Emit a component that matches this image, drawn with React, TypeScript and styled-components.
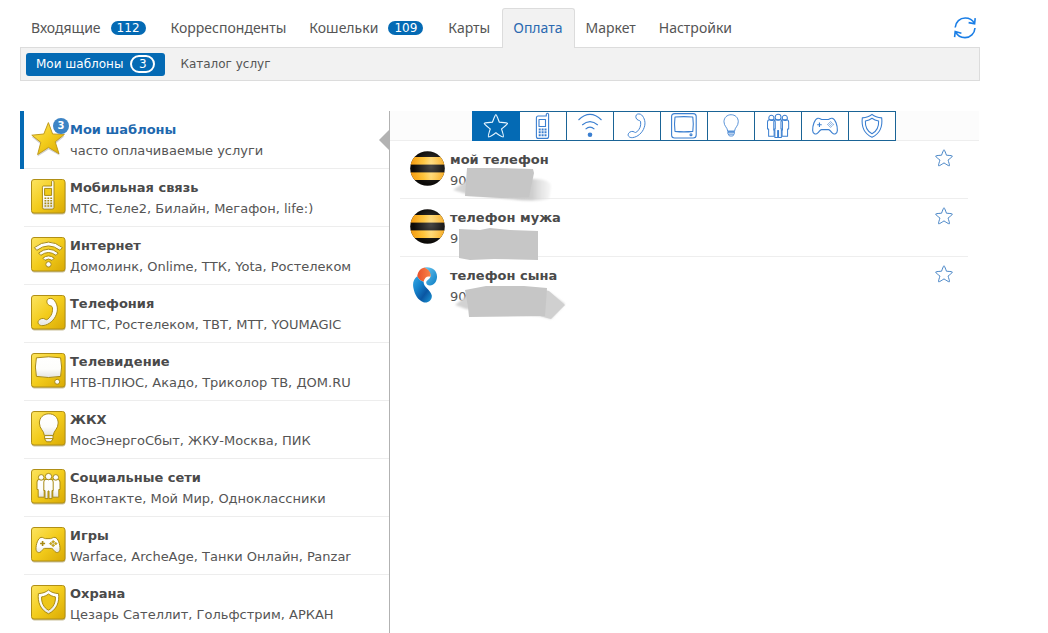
import React, { useState } from "react";
import styled, { createGlobalStyle, css } from "styled-components";

const BLUE = "#046ab4";
const BODY_FONT = `"DejaVu Sans", Verdana, sans-serif`;
const TAB_FONT = `"Noto Sans", "Segoe UI", sans-serif`;

const GlobalStyle = createGlobalStyle`
  *, *::before, *::after { box-sizing: border-box; }
  body { margin: 0; background: #fff; color: #555; font-family: ${BODY_FONT}; font-size: 13px; }
  a { color: inherit; text-decoration: none; }
  button { font: inherit; color: inherit; background: none; border: 0; padding: 0; cursor: pointer; }
  ul { list-style: none; margin: 0; padding: 0; }
`;

const Page = styled.div`
  max-width: 1000px;
  padding: 8px 20px 0;
`;

const TabBar = styled.nav`
  display: flex;
  height: 40px;
  margin-bottom: -1px;
`;

const Tab = styled.a<{ $active?: boolean }>`
  display: flex;
  align-items: center;
  gap: 10px;
  padding: 0 11px 2px 10px;
  border: 1px solid transparent;
  border-bottom: 0;
  border-radius: 3px 3px 0 0;
  font-family: ${TAB_FONT};
  font-size: 14px;
  white-space: nowrap;
  ${(p) => p.$active && css`
    position: relative;
    background: #f2f2f2;
    border-color: #dcdcdc;
    color: #2a69b0;
  `}
`;

const Badge = styled.span`
  min-width: 35px;
  height: 14px;
  margin-right: 2px;
  border-radius: 7px;
  background: ${BLUE};
  color: #fff;
  font: 12px/14px ${BODY_FONT};
  text-align: center;
`;

const RefreshButton = styled.button`
  width: 24px;
  height: 24px;
  margin: 8px 3px 0 auto;
`;

const SubBar = styled.nav`
  display: flex;
  align-items: center;
  gap: 5px;
  height: 34px;
  padding: 0 5px;
  background: #f2f2f2;
  border: 1px solid #dcdcdc;
  font-size: 12px;
`;

const SubTab = styled.a<{ $active?: boolean }>`
  display: flex;
  align-items: center;
  gap: 7px;
  height: 23px;
  padding: 0 10px;
  border-radius: 3px;
  ${(p) => p.$active && css`
    background: ${BLUE};
    color: #fff;
  `}
`;

const RingBadge = styled.span`
  width: 25px;
  height: 18px;
  border: 2px solid #fff;
  border-radius: 9px;
  line-height: 14px;
  text-align: center;
`;

const Columns = styled.main`
  display: flex;
  align-items: stretch;
  margin-top: 30px;
`;

const Sidebar = styled.nav`
  position: relative;
  flex: 0 0 370px;
  border-right: 1px solid #b2b2b2;
`;

const Pointer = styled.svg`
  position: absolute;
  right: 0;
  top: 19px;
`;

const Category = styled.a<{ $active?: boolean }>`
  display: flex;
  gap: 4px;
  height: 58px;
  padding: 10px 0 0 7px;
  border-left: 4px solid transparent;
  border-image: linear-gradient(${(p) => (p.$active ? BLUE : "transparent")} 0 100%) 0 0 0 4;
  box-shadow: inset 0 -1px #ededed;
  strong { color: ${(p) => (p.$active ? "#1e68ae" : "#4a4a4a")}; }
  &:last-of-type { box-shadow: none; }
`;

const IconBox = styled.span`
  position: relative;
  flex: none;
  width: 35px;
  height: 36px;
`;

const StarCount = styled.span`
  position: absolute;
  top: -3px;
  right: -3px;
  width: 16px;
  height: 16px;
  border-radius: 8px;
  background: #3d84c5;
  color: #fff;
  font-size: 10px;
  font-weight: bold;
  line-height: 16px;
  text-align: center;
`;

const Caption = styled.span`
  display: flex;
  flex-direction: column;
  font-size: 13px;
  line-height: 21px;
  margin-top: -2px;
  white-space: nowrap;
`;

const Content = styled.section`
  flex: 1;
  padding-right: 1px;
`;

const Filters = styled.div`
  display: flex;
  justify-content: center;
  height: 30px;
  padding-right: 1px;
  background: #fcfcfc;
  box-shadow: inset 0 -1px #eee;
`;

const FilterButton = styled.button<{ $active?: boolean }>`
  display: flex;
  align-items: center;
  justify-content: center;
  width: 47px;
  height: 30px;
  border: 1px solid #1a6496;
  border-left-width: 0;
  background: #fff;
  color: #3b7fd0;
  ${(p) => p.$active && css`
    width: 48px;
    border-color: ${BLUE};
    background: ${BLUE};
    color: #e8f6ff;
  `}
`;

const Templates = styled.ul`
  padding: 0 11px 0 10px;
`;

const Template = styled.li`
  display: flex;
  gap: 5px;
  height: 58px;
  padding: 10px 14px 0 10px;
  box-shadow: inset 0 -1px #eee;
  strong { color: #4a4a4a; }
  &:last-child { box-shadow: none; }
`;

const PhoneNumber = styled.span`
  position: relative;
`;

const Smudge = styled.svg`
  position: absolute;
  left: 0;
  top: -3px;
`;

const FavouriteButton = styled.button`
  width: 20px;
  height: 18px;
  margin-left: auto;
  margin-top: -2px;
  color: #4382c4;
`;

type Kind = "star" | "mobile" | "wifi" | "phone" | "tv" | "bulb" | "people" | "pad" | "shield";

const HANDSET =
  "M16.5 4.5C17.5 3 21 3 22.5 4.5C26 8 27.5 13.5 25.5 19C23.5 25 18 30 12 30.6C8 31 6 28 7.6 25.6C9 23.4 12.5 22.8 14.2 24.2C15 25 16 24.8 17 24C20.5 21 22 17 21.4 12.5C21 11 20 11 18.8 10.6C16 9.6 15.2 6.5 16.5 4.5Z";
const BULB =
  "M13.3 24.4C13 19.5 8.4 18 8.4 12C8.4 6.5 12.5 2.8 17.8 2.8C23.1 2.8 27.2 6.5 27.2 12C27.2 18 22.6 19.5 22.3 24.4Z";
const BULB_BASE = "M13.6 24.6H22V27.8L20 30.8H15.6L13.6 27.8Z";
const SHIELD = "M17.5 5C20 7.2 23.5 8.4 27.6 8.6C28.6 17 25.6 25 17.5 28.8C9.4 25 6.4 17 7.4 8.6C11.5 8.4 15 7.2 17.5 5Z";
const SHIELD_IN = "M17.5 9C19.5 10.6 21.8 11.5 24.4 11.9C24.7 17.5 22.4 22.6 17.5 25.2C12.6 22.6 10.3 17.5 10.6 11.9C13.2 11.5 15.5 10.6 17.5 9Z";
const PAD =
  "M10 10.4C12 10 13 11.6 14.5 11.6H19.5C21 11.6 22 10 24 10.4C27 11 29.2 17.5 29 22.2C28.8 25.4 26 26.6 24 24.6C22.5 23.2 21.8 21.4 20.4 21.4H13.6C12.2 21.4 11.5 23.2 10 24.6C8 26.6 5.2 25.4 5 22.2C4.8 17.5 7 11 10 10.4Z";
const STAR =
  "M12 1C12.7 1 14.6 6.6 15.3 8.3C17 8.5 23 8.6 23.2 9.4C23.4 10.2 18.8 13.6 17.4 14.8C18 16.6 19.8 21.9 19.1 22.4C18.4 22.9 13.6 19.5 12 18.5C10.4 19.5 5.6 22.9 4.9 22.4C4.2 21.9 6 16.6 6.6 14.8C5.2 13.6 .6 10.2 .8 9.4C1 8.6 7 8.5 8.7 8.3C9.4 6.6 11.3 1 12 1Z";

const SidePerson = ({ x }: { x: number }) => (
  <g transform={`translate(${x} 0)`}>
    <path d="M-4.2 13Q-4.2 10.4-2 10.4H2Q4.2 10.4 4.2 13V20.5H3V28.2H-3V20.5H-4.2Z" />
    <circle cx="0" cy="8.4" r="2.8" />
  </g>
);

const People = () => (
  <g>
    <SidePerson x={10.2} />
    <SidePerson x={24.8} />
    <path d="M12.8 13Q12.8 10.4 15 10.4H20Q22.2 10.4 22.2 13V21.5H21V29.6H18V22H17V29.6H14V21.5H12.8Z" />
    <circle cx="17.5" cy="7.6" r="3.2" />
  </g>
);

const GoldShape = ({ kind }: { kind: Kind }) => {
  switch (kind) {
    case "mobile":
      return (
        <g>
          <path d="M12.5 7H20.6V2.4Q21.8.4 23 2.4V28.4Q23 30.2 21 30.2H13.2Q11.4 30.2 11.4 28.4V8.2Q11.4 7 12.5 7Z" />
          <rect x="13.6" y="9.4" width="7" height="7" fill="#f0cb1c" />
          <path d="M13.5 19.2h7.6M13.5 21.8h7.6M13.5 24.4h7.6M13.5 27h7.6" stroke="#a88a14" strokeWidth="1.6" strokeDasharray="1.8 1.1" />
        </g>
      );
    case "wifi":
      return (
        <g>
          <path d="M3.4 10.6Q17.5-.4 31.4 10.6L29 13.4Q17.5 4.4 5.8 13.4Z" />
          <path d="M7.6 16Q17.5 8.4 27.2 16L25 18.4Q17.5 12.6 9.8 18.4Z" />
          <path d="M11.8 21.2Q17.5 16.6 23.2 21.2L21 23.4Q17.5 20.6 14 23.4Z" />
          <circle cx="17.5" cy="27.4" r="2.7" />
        </g>
      );
    case "phone":
      return <path d={HANDSET} />;
    case "tv":
      return (
        <g>
          <path d="M5.4 4.8Q17.5 2.8 29.6 4.8Q31.6 14 29.6 23.4Q17.5 25.6 5.4 23.4Q3.4 14 5.4 4.8Z" />
          <circle cx="26.2" cy="28.8" r="2.5" />
        </g>
      );
    case "bulb":
      return (
        <g>
          <path d={BULB} />
          <path d={BULB_BASE} />
          <path d="M13.6 27.6H22" />
        </g>
      );
    case "people":
      return <People />;
    case "pad":
      return (
        <g>
          <path d={PAD} />
          <path d="M11.6 14v5M9.1 16.5h5" strokeWidth="1.6" />
          <path d="M22.2 13.4l1.6 1.4-1.6 1.4-1.6-1.4ZM22.2 17l1.6 1.4-1.6 1.4-1.6-1.4ZM19.8 15.2l1.4 1.4-1.4 1.4-1.4-1.4ZM24.8 15.2l1.4 1.4-1.4 1.4-1.4-1.4Z" fill="#c9a816" strokeWidth=".5" />
        </g>
      );
    case "shield":
      return (
        <g>
          <path d={SHIELD} />
          <path d={SHIELD_IN} fill="#edc61a" />
        </g>
      );
    default:
      return null;
  }
};

const Defs = styled.svg`
  display: block;
`;

const Gradients = () => (
  <Defs width="0" height="0" aria-hidden="true">
    <defs>
      <linearGradient id="gold" x1="0" y1="0" x2="1" y2="1">
        <stop offset="0" stopColor="#fce460" />
        <stop offset=".5" stopColor="#f3cc1c" />
        <stop offset="1" stopColor="#d9aa04" />
      </linearGradient>
      <linearGradient id="pearl" x1="0" y1="0" x2="0" y2="1">
        <stop offset="0" stopColor="#fff" />
        <stop offset=".6" stopColor="#fdfdfb" />
        <stop offset="1" stopColor="#e4e4e2" />
      </linearGradient>
      <linearGradient id="amber" x1="0" y1="0" x2="1" y2="0">
        <stop offset="0" stopColor="#f39a14" />
        <stop offset=".4" stopColor="#ffc02c" />
        <stop offset=".6" stopColor="#ffd465" />
        <stop offset="1" stopColor="#f7a81c" />
      </linearGradient>
      <radialGradient id="gloss" cx=".6" cy=".45" r=".5">
        <stop offset="0" stopColor="#fff" stopOpacity=".25" />
        <stop offset="1" stopColor="#fff" stopOpacity="0" />
      </radialGradient>
      <clipPath id="ball"><circle cx="17.5" cy="17.5" r="17.3" /></clipPath>
      <linearGradient id="flame" x1="0" y1="0" x2="1" y2="0">
        <stop offset="0" stopColor="#e8502a" />
        <stop offset="1" stopColor="#f9844a" />
      </linearGradient>
      <linearGradient id="sky" x1="0" y1="0" x2="1" y2="1">
        <stop offset="0" stopColor="#6cc8f0" />
        <stop offset="1" stopColor="#0a7cc4" />
      </linearGradient>
      <linearGradient id="deep" x1="0" y1="0" x2="1" y2="1">
        <stop offset="0" stopColor="#35a8e4" />
        <stop offset=".35" stopColor="#1583cc" />
        <stop offset=".65" stopColor="#0a56a2" />
        <stop offset="1" stopColor="#1c9ad8" />
      </linearGradient>
      <linearGradient id="smear" x1="0" y1="0" x2="1" y2="0">
        <stop offset="0" stopColor="#dadada" />
        <stop offset=".3" stopColor="#c6c6c6" />
        <stop offset=".8" stopColor="#cccccc" />
        <stop offset="1" stopColor="#e8e8e8" stopOpacity=".4" />
      </linearGradient>
      <filter id="soft" x="-10%" y="-10%" width="120%" height="120%"><feGaussianBlur stdDeviation="1" /></filter>
    </defs>
  </Defs>
);

const GoldIcon = ({ kind }: { kind: Kind }) =>
  kind === "star" ? (
    <svg width="35" height="36" viewBox="0 0 35 36" aria-hidden="true">
      <path d="M17.4 2.4L21.6 14L33.6 14.2L24.6 21.8L28.6 33.6L17.6 27.4L6.6 34.6L9.8 22.4L.8 15L12.8 14Z" fill="#999" opacity=".45" transform="translate(0 1)" />
      <path d="M17.4 1.6L21.6 13L33.4 13.4L24.2 20.8L28 32.8L17.5 26.4L6.6 33.6L9.8 21.4L.8 14.2L12.8 13Z" fill="url(#gold)" stroke="#c19c1e" strokeWidth="1" strokeLinejoin="round" />
    </svg>
  ) : (
    <svg width="35" height="36" viewBox="0 0 35 36" aria-hidden="true">
      <rect x=".5" y="2" width="34" height="33.4" rx="3" fill="#8a7422" opacity=".45" />
      <rect x=".5" y=".5" width="33.5" height="33.5" rx="2.5" fill="url(#gold)" stroke="#b08f16" />
      <g fill="url(#pearl)" stroke="#a88a14" strokeWidth="1" strokeLinejoin="round">
        <GoldShape kind={kind} />
      </g>
    </svg>
  );

const LineShape = ({ kind }: { kind: Kind }) => {
  switch (kind) {
    case "star":
      return <path d={STAR} transform="translate(1.4 1.6) scale(1.04)" />;
    case "mobile":
      return (
        <g>
          <path d="M9.3 4H17.3V2.2Q18.4.4 19.6 2.2V24.4Q19.6 26.4 17.6 26.4H9.3Q7.4 26.4 7.4 24.4V6Q7.4 4 9.3 4Z" />
          <rect x="10" y="7.5" width="6.5" height="7" />
          <path d="M9.7 17.4h8M9.7 20.3h8M9.7 23.2h8" strokeWidth="2" strokeDasharray="2 .9" />
        </g>
      );
    case "wifi":
      return (
        <g>
          <path d="M2.5 8Q14-3.2 25.5 8M6.2 13Q14 6.2 21.8 13M9.6 17.2Q14 13 18.4 17.2" />
          <circle cx="14" cy="22.8" r="2.3" fill="currentColor" stroke="none" />
        </g>
      );
    case "phone":
      return <path d={HANDSET} transform="translate(-1 -1) scale(.87)" />;
    case "tv":
      return (
        <g>
          <rect x="1.6" y="1.6" width="24.6" height="24.4" rx="3" />
          <path d="M5 5Q14 4.2 22.8 5Q23.8 12 22.8 19.4Q14 20.4 5 19.4Q4 12 5 5Z" />
          <circle cx="21" cy="22.8" r="1" />
        </g>
      );
    case "bulb":
      return (
        <g transform="translate(.6 .6) scale(.76)">
          <path d={BULB} />
          <path d={BULB_BASE} />
          <path d="M13.6 26.4H22M14.6 28.4H21" />
        </g>
      );
    case "people":
      return <g transform="translate(-2 -1.8) scale(.92)"><People /></g>;
    case "pad":
      return (
        <g transform="translate(-3.5 -4.4) scale(1.03)">
          <path d={PAD} />
          <path d="M11.6 14.4v4.4M9.4 16.6h4.4" />
          <path d="M22.4 13.6l.9.9-.9.9-.9-.9ZM22.4 17.4l.9.9-.9.9-.9-.9ZM20.4 15.5l.9.9-.9.9-.9-.9ZM24.4 15.5l.9.9-.9.9-.9-.9Z" strokeWidth=".7" />
        </g>
      );
    case "shield":
      return (
        <g transform="translate(-2.8 -2.4) scale(.96)">
          <path d={SHIELD} />
          <path d={SHIELD_IN} />
        </g>
      );
  }
};

const LineIcon = ({ kind }: { kind: Kind }) => (
  <svg width="28" height="28" viewBox="0 0 28 28" fill="none" stroke="currentColor" strokeWidth="1.1" strokeLinejoin="round" aria-hidden="true">
    <LineShape kind={kind} />
  </svg>
);

const RefreshIcon = () => (
  <svg width="24" height="24" viewBox="0 0 24 24" fill="none" stroke="#1a7ee6" strokeWidth="1.6" aria-hidden="true">
    <path d="M2.2 11.5C2.6 6 7 2 12.2 2C16.4 2 19.6 4 21.4 7.4M22.2 2.2L21.6 7.8L15.6 6.6" />
    <path d="M22 12C21.6 17.5 17.4 21.6 12 21.6C7.8 21.6 4.4 19.4 2.6 15.8M1.6 21.2L2.2 15.6L8.4 17.2" />
  </svg>
);

const BeelineLogo = () => (
  <svg width="35" height="36" viewBox="0 0 35 36" aria-hidden="true">
    <g clipPath="url(#ball)">
      <rect width="35" height="35" fill="#0c0a08" />
      <rect y="6" width="35" height="7.6" fill="url(#amber)" />
      <rect y="21.4" width="35" height="7.6" fill="url(#amber)" />
      <rect width="35" height="35" fill="url(#gloss)" />
    </g>
  </svg>
);

const RostelecomLogo = () => (
  <svg width="35" height="36" viewBox="0 0 35 36" aria-hidden="true">
    <path d="M14.5 .6C21.5 -.8 27.6 3.4 27 10.6C26.6 15 24 18.4 20 18.6C17.8 18.6 16.2 17.4 16.2 15.6C16.2 13.4 19.6 12.4 20.4 9.8C21 6.6 18 2.6 14.5 .6Z" fill="url(#sky)" />
    <path d="M7.2 9.2C8 4.4 10.6 1.4 14.5 .6C19.4 2.8 21.4 6.6 20.4 9.8C17.4 8.6 14.6 10.4 13.6 14.8C11 14.2 8.6 12 7.2 9.2Z" fill="url(#flame)" />
    <path d="M7.2 9.2C8.6 12 11 14.2 13.6 14.8C13.4 20.4 21 23 21.8 28.6C22.2 33 17.8 36.6 13.4 35.2C8 33.2 4.8 28 3.4 21C2.4 16 3.6 12 7.2 9.2Z" fill="url(#deep)" />
  </svg>
);

const SMUDGES = [
  <g>
    <path d="M44 10L84 12Q101 12 101 20L99 32Q84 35 60 32L20 28L3 23L16 14Z" fill="url(#smear)" filter="url(#soft)" />
    <path d="M17 1L48 1L83 2L84 6L79 30L52 31L15 29Z" fill="#c6c6c6" />
  </g>,
  <path d="M9 4L30 5L40 3L60 5L88 6V35L44 34L20 35L9 33Z" fill="#c6c6c6" />,
  <g transform="translate(0 2)">
    <path d="M5 20L20 8L80 4L99 7L115 19L101 34L90 31L16 24Z" fill="#d2d2d2" filter="url(#soft)" />
    <path d="M90 4L99 6L115 20L101 34L90 31Z" fill="#d0d0d0" />
    <path d="M15 5L36 1L74 1L97 3L96 18L95 31L19 32L18 22Z" fill="#c6c6c6" />
  </g>,
];

const categories: { kind: Kind; title: string; note: string }[] = [
  { kind: "star", title: "Мои шаблоны", note: "часто оплачиваемые услуги" },
  { kind: "mobile", title: "Мобильная связь", note: "МТС, Теле2, Билайн, Мегафон, life:)" },
  { kind: "wifi", title: "Интернет", note: "Домолинк, Onlime, ТТК, Yota, Ростелеком" },
  { kind: "phone", title: "Телефония", note: "МГТС, Ростелеком, ТВТ, МТТ, YOUMAGIC" },
  { kind: "tv", title: "Телевидение", note: "НТВ-ПЛЮС, Акадо, Триколор ТВ, ДОМ.RU" },
  { kind: "bulb", title: "ЖКХ", note: "МосЭнергоСбыт, ЖКУ-Москва, ПИК" },
  { kind: "people", title: "Социальные сети", note: "Вконтакте, Мой Мир, Одноклассники" },
  { kind: "pad", title: "Игры", note: "Warface, ArcheAge, Танки Онлайн, Panzar" },
  { kind: "shield", title: "Охрана", note: "Цезарь Сателлит, Гольфстрим, АРКАН" },
];

const tabs: { label: string; count?: number }[] = [
  { label: "Входящие", count: 112 },
  { label: "Корреспонденты" },
  { label: "Кошельки", count: 109 },
  { label: "Карты" },
  { label: "Оплата" },
  { label: "Маркет" },
  { label: "Настройки" },
];

const templates = [
  { name: "мой телефон", digits: "90", Logo: BeelineLogo },
  { name: "телефон мужа", digits: "9", Logo: BeelineLogo },
  { name: "телефон сына", digits: "90", Logo: RostelecomLogo },
];

export default function App() {
  const [filter, setFilter] = useState<Kind>("star");
  return (
    <Page>
      <GlobalStyle />
      <Gradients />
      <TabBar>
        {tabs.map((t) => (
          <Tab key={t.label} href="#" $active={t.label === "Оплата"}>
            {t.label}
            {t.count && <Badge>{t.count}</Badge>}
          </Tab>
        ))}
        <RefreshButton aria-label="Обновить"><RefreshIcon /></RefreshButton>
      </TabBar>
      <SubBar>
        <SubTab href="#" $active>Мои шаблоны<RingBadge>3</RingBadge></SubTab>
        <SubTab href="#">Каталог услуг</SubTab>
      </SubBar>
      <Columns>
        <Sidebar>
          {categories.map((c) => (
            <Category key={c.kind} href="#" $active={c.kind === "star"}>
              <IconBox>
                <GoldIcon kind={c.kind} />
                {c.kind === "star" && <StarCount>3</StarCount>}
              </IconBox>
              <Caption><strong>{c.title}</strong><span>{c.note}</span></Caption>
            </Category>
          ))}
          <Pointer width="10" height="20" viewBox="0 0 10 20" aria-hidden="true"><path d="M10 0V20L0 10Z" fill="#b2b2b2" /></Pointer>
        </Sidebar>
        <Content>
          <Filters>
            {categories.map((c) => (
              <FilterButton key={c.kind} aria-label={c.title} $active={c.kind === filter} onClick={() => setFilter(c.kind)}>
                <LineIcon kind={c.kind} />
              </FilterButton>
            ))}
          </Filters>
          <Templates>
            {templates.map(({ name, digits, Logo }, i) => (
              <Template key={name}>
                <IconBox><Logo /></IconBox>
                <Caption>
                  <strong>{name}</strong>
                  <PhoneNumber>
                    {digits}
                    <Smudge width="120" height="38" viewBox="0 0 120 38" aria-hidden="true">{SMUDGES[i]}</Smudge>
                  </PhoneNumber>
                </Caption>
                <FavouriteButton aria-label="В избранное">
                  <svg width="20" height="18" viewBox="0 0 24 24" fill="none" stroke="currentColor" strokeWidth="1.3" aria-hidden="true"><path d={STAR} /></svg>
                </FavouriteButton>
              </Template>
            ))}
          </Templates>
        </Content>
      </Columns>
    </Page>
  );
}
